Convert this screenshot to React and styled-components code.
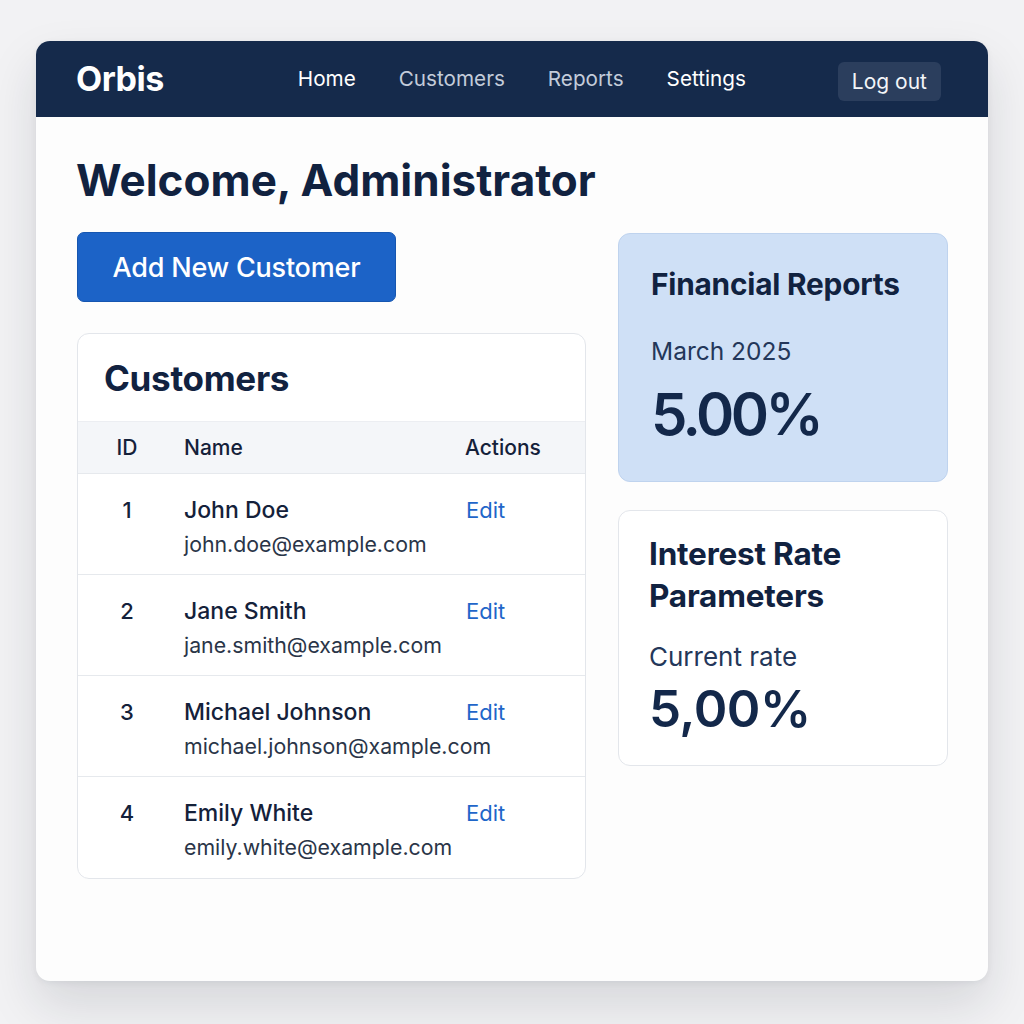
import React from "react";
import styled, { createGlobalStyle } from "styled-components";

const Global = createGlobalStyle`
  html, body { margin: 0; padding: 0; background: #f2f2f4; }
  body { font-family: Inter, "Noto Sans", "Liberation Sans", sans-serif; color: #112240; }
  * { box-sizing: border-box; }
`;

const Page = styled.div`
  padding: 41px 36px 43px;
`;

const Window = styled.div`
  height: 940px;
  background: #fdfdfd;
  border-radius: 14px;
  overflow: hidden;
  box-shadow: 0 24px 50px rgba(20, 30, 50, 0.13), 0 2px 6px rgba(20, 30, 50, 0.06);
`;

const Header = styled.header`
  height: 76px;
  background: #152a4b;
  display: flex;
  align-items: center;
  padding: 0 47px 0 40px;
`;

const Logo = styled.div`
  font-size: 34px;
  font-weight: 700;
  color: #ffffff;
  letter-spacing: -0.5px;
  margin-top: -2px;
`;

const Nav = styled.nav`
  display: flex;
  gap: 43px;
  margin-left: 134px;
  margin-top: -2px;
`;

const NavLink = styled.a`
  font-size: 20.7px;
  font-weight: 400;
  color: ${p => (p.$bright ? "#ffffff" : "#c3ccda")};
  text-decoration: none;
`;

const LogoutButton = styled.button`
  margin-left: auto;
  height: 39px;
  padding: 0 14px;
  border: none;
  border-radius: 6px;
  background: #2b3e5d;
  color: #f3f5f8;
  font-family: inherit;
  font-size: 21px;
  font-weight: 400;
  margin-top: 4px;
`;

const Main = styled.main`
  padding: 37px 40px 0;
`;

const Title = styled.h1`
  margin: 0 0 25px;
  font-size: 44px;
  line-height: 53px;
  font-weight: 700;
  color: #112240;
  letter-spacing: 0;
`;

const Columns = styled.div`
  display: grid;
  grid-template-columns: 510px 330px;
  column-gap: 32px;
  align-items: start;
`;

const LeftCol = styled.div`
  display: flex;
  flex-direction: column;
  gap: 31px;
  padding-left: 1px;
`;

const RightCol = styled.div`
  display: flex;
  flex-direction: column;
  gap: 28px;
  padding-top: 1px;
`;

const PrimaryButton = styled.button`
  align-self: flex-start;
  width: 319px;
  height: 70px;
  border-radius: 7px;
  border: 1px solid #1656b0;
  background: #1c63c7;
  color: #ffffff;
  font-family: inherit;
  font-size: 27px;
  font-weight: 500;
  letter-spacing: -0.2px;
`;

const Card = styled.section`
  background: ${p => (p.$tint ? "#cfe0f6" : "#ffffff")};
  border: 1px solid ${p => (p.$tint ? "#bfd3ee" : "#e3e6eb")};
  border-radius: 12px;
  overflow: hidden;
`;

const CardTitle = styled.h2`
  margin: 0;
  padding: 23px 26px 22px;
  font-size: 35px;
  line-height: 42px;
  font-weight: 700;
  color: #112240;
  letter-spacing: -0.3px;
`;

const TableRow = styled.div`
  display: grid;
  grid-template-columns: 106px 281px 1fr;
  align-items: start;
  border-bottom: ${p => (p.$last ? "none" : "1px solid #e6e9ed")};
  ${p =>
    p.$head
      ? `background: #f4f6f9; border-top: 1px solid #eceef2; height: 53px; align-items: center;`
      : `height: 101px; padding-top: 21px;`}
`;

const HeadCell = styled.div`
  font-size: 21px;
  font-weight: 500;
  color: #14213a;
  ${p => p.$center && `text-align: center; padding-right: 8px;`}
`;

const IdCell = styled.div`
  text-align: center;
  padding-right: 8px;
  font-size: 22px;
  line-height: 30px;
  font-weight: 500;
  color: #14213a;
`;

const NameCell = styled.div`
  display: flex;
  flex-direction: column;
  gap: 5px;
`;

const Name = styled.div`
  font-size: 23px;
  line-height: 30px;
  font-weight: 500;
  color: #14213a;
`;

const Email = styled.div`
  font-size: 21.3px;
  line-height: 28px;
  color: #2a3548;
  white-space: nowrap;
`;

const EditLink = styled.a`
  font-size: 22px;
  line-height: 30px;
  color: #1f66c9;
  text-decoration: none;
  padding-left: 1px;
`;

const InfoCard = styled(Card)`
  padding: ${p => (p.$tint ? "33px 32px 34px" : "22px 30px 28px")};
`;

const InfoTitle = styled.h3`
  margin: 0;
  font-size: ${p => p.$size}px;
  line-height: ${p => (p.$tight ? "35px" : "42px")};
  font-weight: 700;
  color: #112240;
  letter-spacing: -0.2px;
`;

const InfoLabel = styled.div`
  margin-top: ${p => p.$mt}px;
  font-size: ${p => p.$size}px;
  line-height: 1.2;
  color: #24375a;
`;

const InfoValue = styled.div`
  margin-top: ${p => p.$mt}px;
  font-size: ${p => p.$size}px;
  line-height: 1.1;
  font-weight: 600;
  color: #13284a;
  letter-spacing: ${p => p.$ls};
`;

const customers = [
  { id: 1, name: "John Doe", email: "john.doe@example.com" },
  { id: 2, name: "Jane Smith", email: "jane.smith@example.com" },
  { id: 3, name: "Michael Johnson", email: "michael.johnson@xample.com" },
  { id: 4, name: "Emily White", email: "emily.white@example.com" },
];

export default function App() {
  return (
    <>
      <Global />
      <Page>
        <Window>
          <Header>
            <Logo>Orbis</Logo>
            <Nav>
              <NavLink $bright>Home</NavLink>
              <NavLink>Customers</NavLink>
              <NavLink>Reports</NavLink>
              <NavLink $bright>Settings</NavLink>
            </Nav>
            <LogoutButton>Log out</LogoutButton>
          </Header>
          <Main>
            <Title>Welcome, Administrator</Title>
            <Columns>
              <LeftCol>
                <PrimaryButton>Add New Customer</PrimaryButton>
                <Card>
                  <CardTitle>Customers</CardTitle>
                  <TableRow $head>
                    <HeadCell $center>ID</HeadCell>
                    <HeadCell>Name</HeadCell>
                    <HeadCell>Actions</HeadCell>
                  </TableRow>
                  {customers.map((c, i) => (
                    <TableRow key={c.id} $last={i === customers.length - 1}>
                      <IdCell>{c.id}</IdCell>
                      <NameCell>
                        <Name>{c.name}</Name>
                        <Email>{c.email}</Email>
                      </NameCell>
                      <EditLink>Edit</EditLink>
                    </TableRow>
                  ))}
                </Card>
              </LeftCol>
              <RightCol>
                <InfoCard $tint>
                  <InfoTitle $tight $size={29.8}>Financial Reports</InfoTitle>
                  <InfoLabel $mt={35} $size={24.5}>March 2025</InfoLabel>
                  <InfoValue $mt={17} $size={58} $ls="-3.5px">5.00%</InfoValue>
                </InfoCard>
                <InfoCard>
                  <InfoTitle $size={31.5}>Interest Rate<br />Parameters</InfoTitle>
                  <InfoLabel $mt={24} $size={26}>Current rate</InfoLabel>
                  <InfoValue $mt={9} $size={51} $ls="-0.5px">5,00%</InfoValue>
                </InfoCard>
              </RightCol>
            </Columns>
          </Main>
        </Window>
      </Page>
    </>
  );
}
